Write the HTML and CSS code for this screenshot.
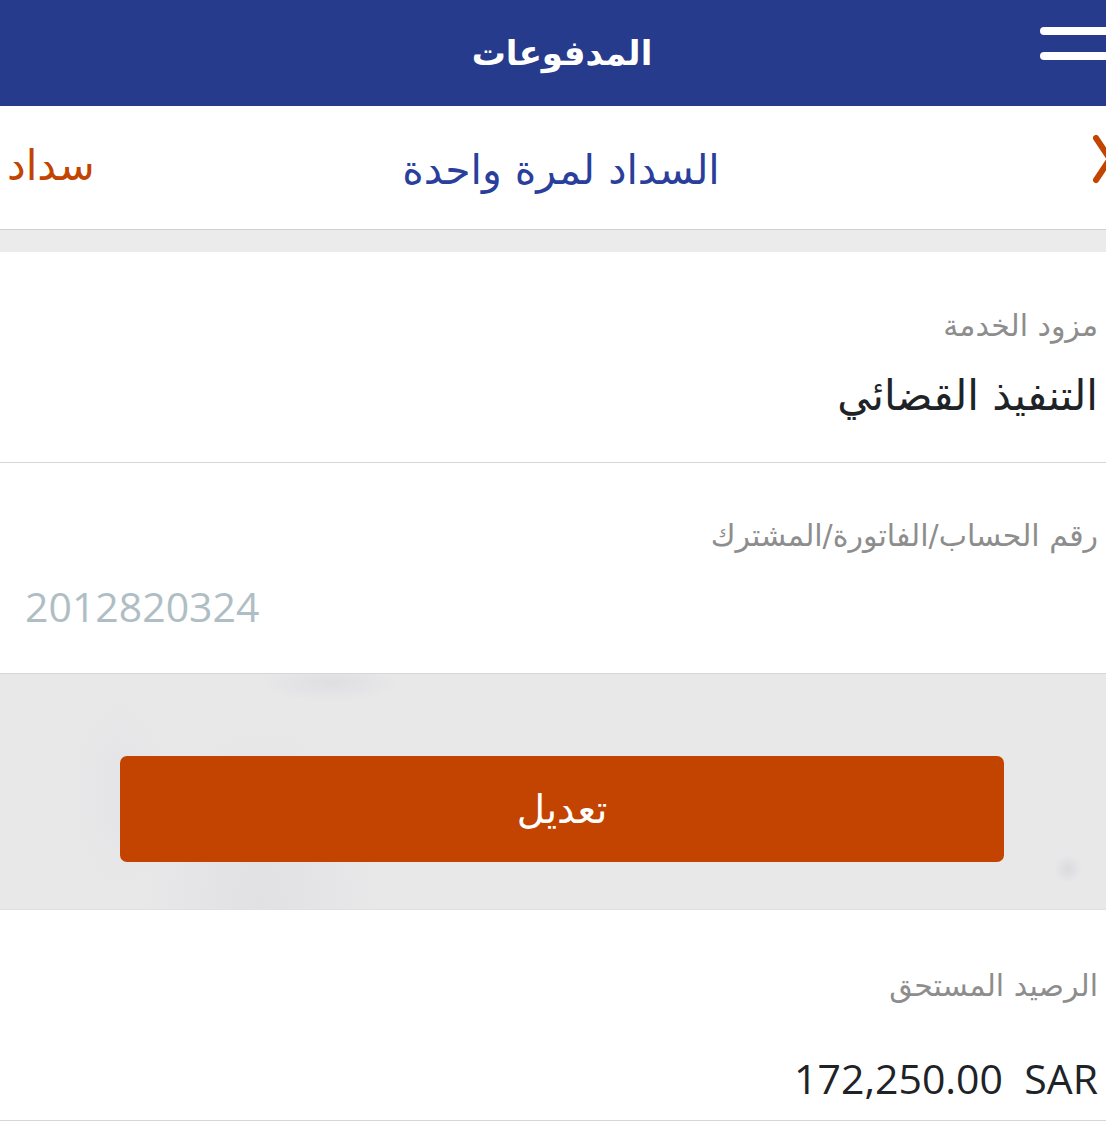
FILE: index.html
```html
<!DOCTYPE html>
<html lang="ar" dir="rtl">
<head>
<meta charset="utf-8">
<title>المدفوعات</title>
<link rel="stylesheet" href="styles.css">
</head>
<body>
<header class="topbar">
  <div class="menu" aria-label="menu">
    <span class="bar"></span>
    <span class="bar"></span>
  </div>
  <h1 class="topbar-title">المدفوعات</h1>
</header>
<nav class="subbar">
  <svg class="chev" width="20" height="50" viewBox="0 0 20 50"><path d="M3 3 L17 24 L3 45" fill="none" stroke="#c24400" stroke-width="6" stroke-linecap="round" stroke-linejoin="round"/></svg>
  <h2 class="subbar-title">السداد لمرة واحدة</h2>
  <span class="subbar-action">سداد</span>
</nav>
<div class="strip"></div>
<section class="field field-a">
  <div class="label">مزود الخدمة</div>
  <div class="value">التنفيذ القضائي</div>
</section>
<section class="field field-b">
  <div class="label">رقم الحساب/الفاتورة/المشترك</div>
  <div class="value value-num"><bdi>2012820324</bdi></div>
</section>
<div class="action-area">
  <button class="btn">تعديل</button>
</div>
<section class="field field-c">
  <div class="label">الرصيد المستحق</div>
  <div class="value value-amount"><bdi dir="ltr">172,250.00&nbsp;&nbsp;SAR</bdi></div>
</section>
</body>
</html>
```
FILE: styles.css
```css
html, body {
  margin: 0;
  padding: 0;
  background: #ffffff;
}
body {
  direction: rtl;
  font-family: "DejaVu Sans", "Noto Sans", sans-serif;
  width: 1106px;
  overflow: hidden;
}
.topbar {
  height: 106px;
  background: #263b8c;
  display: flex;
  align-items: center;
  justify-content: center;
  position: relative;
  padding-left: 18px;
  box-sizing: border-box;
}
.topbar-title {
  margin: 0;
  color: #ffffff;
  font-size: 34px;
  font-weight: bold;
  line-height: 40px;
}
.menu {
  position: absolute;
  right: -10px;
  top: 27px;
  display: flex;
  flex-direction: column;
  gap: 17px;
}
.bar {
  display: block;
  width: 76px;
  height: 8px;
  background: #ffffff;
  border-radius: 4px;
}
.subbar {
  height: 123px;
  border-bottom: 1px solid #cfcfcf;
  display: flex;
  align-items: center;
  justify-content: space-between;
  position: relative;
}
.chev {
  margin-right: -7px;
  margin-top: -16px;
}
.subbar-title {
  position: absolute;
  left: 16px;
  right: 0;
  top: 36px;
  margin: 0;
  text-align: center;
  color: #2a3f9b;
  font-size: 41px;
  font-weight: normal;
  line-height: 56px;
}
.subbar-action {
  color: #c24400;
  font-size: 42px;
  line-height: 56px;
  margin-left: 7px;
  margin-top: -4px;
}
.strip {
  height: 22px;
  background: #ebebeb;
}
.field {
  height: 211px;
  border-bottom: 1px solid #d6d6d6;
  box-sizing: border-box;
  padding: 0 8px;
  display: flex;
  flex-direction: column;
}
.label {
  color: #8d8d8d;
  font-size: 30px;
  line-height: 44px;
  margin-top: 52px;
}
.value {
  color: #1e2327;
  font-size: 42px;
  line-height: 56px;
  margin-top: 20px;
}
.field-b .label { margin-top: 51px; }
.value-num {
  text-align: left;
  padding-left: 17px;
  color: #afbec4;
  font-family: "Open Sans", "DejaVu Sans", sans-serif;
  font-size: 41px;
}
.action-area {
  height: 236px;
  background-color: #e8e8e9;
  background-image:
    radial-gradient(ellipse 70px 20px at 330px 8px, rgba(205,205,214,0.35), transparent),
    radial-gradient(ellipse 120px 180px at 260px 225px, rgba(212,212,220,0.35), transparent),
    radial-gradient(circle 14px at 1068px 195px, rgba(205,205,214,0.5), transparent),
    radial-gradient(ellipse 50px 100px at 120px 120px, rgba(222,222,226,0.4), transparent);
  display: flex;
  justify-content: center;
  align-items: flex-start;
  border-bottom: 1px solid #e0e0e0;
  box-sizing: border-box;
}
.btn {
  margin-top: 82px;
  margin-left: 18px;
  width: 884px;
  height: 106px;
  background: #c24400;
  color: #ffffff;
  border: none;
  border-radius: 7px;
  font-family: "DejaVu Sans", sans-serif;
  font-size: 39px;
  font-weight: normal;
}
.field-c .label { margin-top: 54px; }
.field-c .value { margin-top: 42px; }
.value-amount {
  font-family: "Open Sans", "DejaVu Sans", sans-serif;
  font-size: 41px;
}
```
